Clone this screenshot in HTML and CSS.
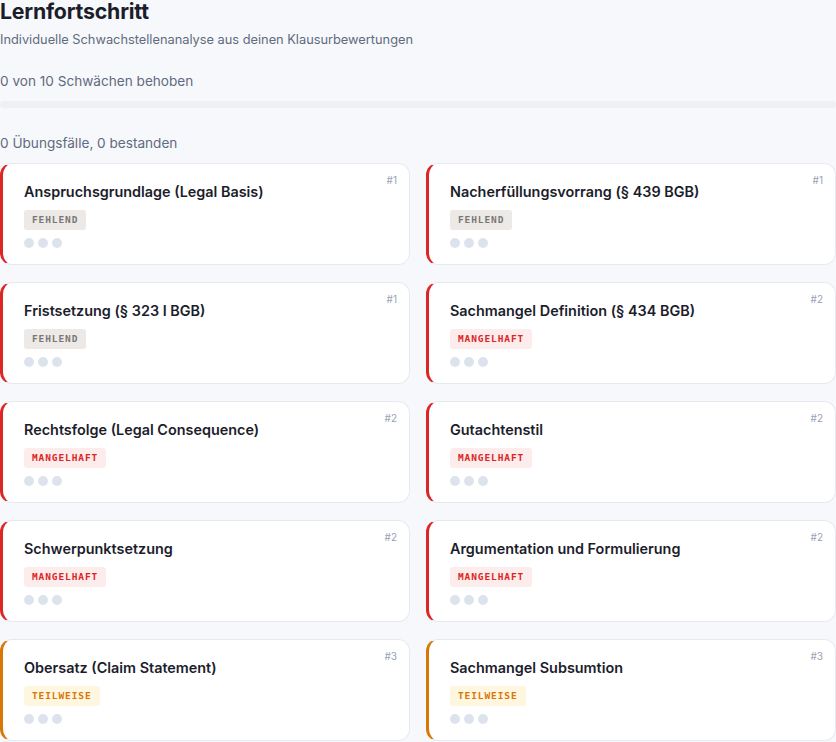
FILE: index.html
```html
<!DOCTYPE html>
<html lang="de">
<head>
<meta charset="utf-8">
<title>Lernfortschritt</title>
<link rel="stylesheet" href="styles.css">
</head>
<body>
<main class="page">
  <header class="head">
    <h1 class="title">Lernfortschritt</h1>
    <p class="subtitle">Individuelle Schwachstellenanalyse aus deinen Klausurbewertungen</p>
    <p class="count">0 von 10 Schwächen behoben</p>
    <div class="progress"><div class="progress-fill" style="width:0%"></div></div>
    <p class="count stats">0 Übungsfälle, 0 bestanden</p>
  </header>
  <section class="grid">
    <article class="card red"><span class="rank">#1</span><h2 class="card-title">Anspruchsgrundlage (Legal Basis)</h2><span class="badge gray">FEHLEND</span><div class="dots"><i></i><i></i><i></i></div></article>
    <article class="card red"><span class="rank">#1</span><h2 class="card-title">Nacherfüllungsvorrang (§ 439 BGB)</h2><span class="badge gray">FEHLEND</span><div class="dots"><i></i><i></i><i></i></div></article>
    <article class="card red"><span class="rank">#1</span><h2 class="card-title">Fristsetzung (§ 323 I BGB)</h2><span class="badge gray">FEHLEND</span><div class="dots"><i></i><i></i><i></i></div></article>
    <article class="card red"><span class="rank">#2</span><h2 class="card-title">Sachmangel Definition (§ 434 BGB)</h2><span class="badge pink">MANGELHAFT</span><div class="dots"><i></i><i></i><i></i></div></article>
    <article class="card red"><span class="rank">#2</span><h2 class="card-title">Rechtsfolge (Legal Consequence)</h2><span class="badge pink">MANGELHAFT</span><div class="dots"><i></i><i></i><i></i></div></article>
    <article class="card red"><span class="rank">#2</span><h2 class="card-title">Gutachtenstil</h2><span class="badge pink">MANGELHAFT</span><div class="dots"><i></i><i></i><i></i></div></article>
    <article class="card red"><span class="rank">#2</span><h2 class="card-title">Schwerpunktsetzung</h2><span class="badge pink">MANGELHAFT</span><div class="dots"><i></i><i></i><i></i></div></article>
    <article class="card red"><span class="rank">#2</span><h2 class="card-title">Argumentation und Formulierung</h2><span class="badge pink">MANGELHAFT</span><div class="dots"><i></i><i></i><i></i></div></article>
    <article class="card orange"><span class="rank">#3</span><h2 class="card-title">Obersatz (Claim Statement)</h2><span class="badge amber">TEILWEISE</span><div class="dots"><i></i><i></i><i></i></div></article>
    <article class="card orange"><span class="rank">#3</span><h2 class="card-title">Sachmangel Subsumtion</h2><span class="badge amber">TEILWEISE</span><div class="dots"><i></i><i></i><i></i></div></article>
  </section>
</main>
</body>
</html>
```

FILE: styles.css
```css
* { box-sizing: border-box; }
html, body { margin: 0; padding: 0; }
body {
  background: #f7f8fb;
  font-family: Inter, "Noto Sans", sans-serif;
  color: #1e1f2e;
  overflow: hidden;
}
.page { width: 836px; }
.head { display: flex; flex-direction: column; }
.title {
  margin: 0;
  font-size: 21.3px;
  line-height: 22px;
  font-weight: 700;
  color: #1c1d2b;
  letter-spacing: -0.2px;
}
.subtitle {
  margin: 9px 0 0;
  font-size: 12.8px;
  line-height: 18px;
  color: #5f6b7e;
}
.count {
  margin: 22px 0 0;
  font-size: 13.6px;
  line-height: 20px;
  color: #5f6b7e;
}
.progress {
  margin-top: 10px;
  height: 7px;
  border-radius: 4px;
  background: #eef0f4;
  overflow: hidden;
}
.progress-fill { height: 100%; background: #dc2626; }
.stats { margin-top: 25px; }
.grid {
  margin-top: 10px;
  display: grid;
  grid-template-columns: 1fr 1fr;
  column-gap: 16px;
  row-gap: 17px;
}
.card {
  position: relative;
  background: #fff;
  border: 1px solid #e6e9ef;
  border-left: 3px solid #dc2626;
  border-radius: 12px;
  padding: 18px 20px 15px 21px;
  height: 102px;
  display: flex;
  flex-direction: column;
  align-items: flex-start;
}
.card.orange { border-left-color: #d97706; }
.rank {
  position: absolute;
  top: 10px;
  right: 12px;
  font-size: 10px;
  color: #97a3b6;
  font-family: Inter, sans-serif;
}
.card-title {
  margin: 0;
  font-size: 14.4px;
  line-height: 20px;
  font-weight: 600;
  color: #1c1d2b;
}
.badge {
  margin-top: 8px;
  height: 20px;
  padding: 0 8px;
  border-radius: 3px;
  font-family: "DejaVu Sans Mono", "Liberation Mono", monospace;
  font-weight: 700;
  font-size: 9.5px;
  letter-spacing: 0.9px;
  line-height: 20px;
}
.badge.gray { background: #ece9e7; color: #7a7776; }
.badge.pink { background: #fdecec; color: #dc2626; }
.badge.amber { background: #fff6e0; color: #d97706; }
.dots { display: flex; gap: 4px; margin-top: 8px; }
.dots i { width: 10px; height: 10px; border-radius: 50%; background: #dde3ed; display: block; }
```
